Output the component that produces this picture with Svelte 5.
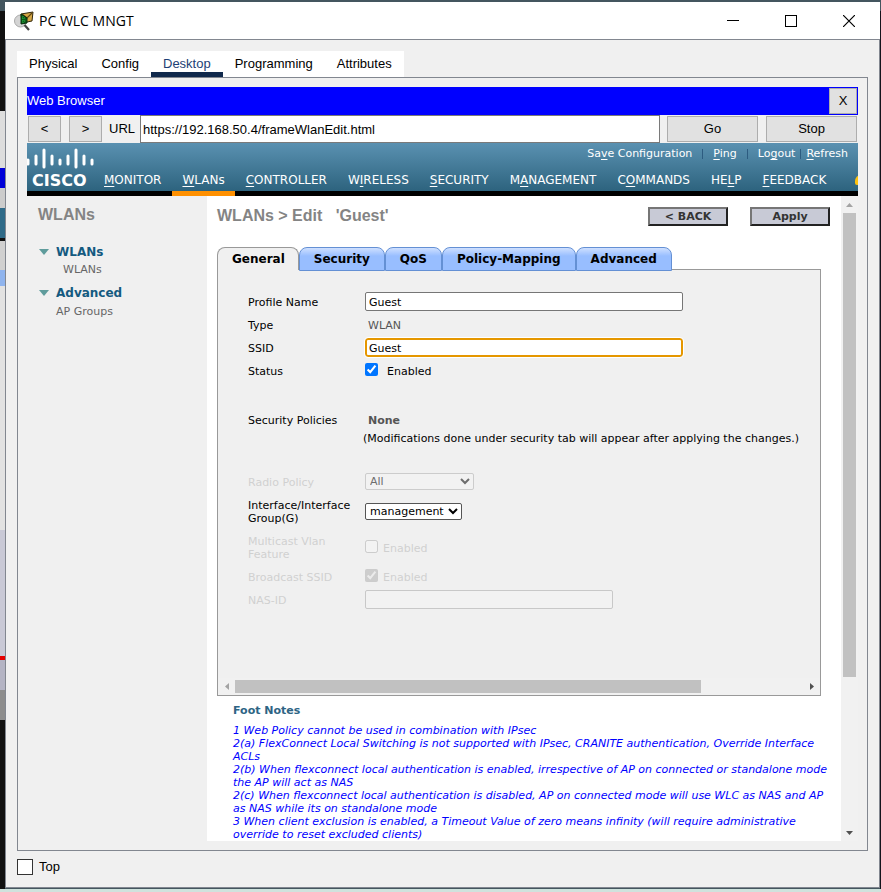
<script>
  const windowTabs = ['Physical', 'Config', 'Desktop', 'Programming', 'Attributes'];

  // Each entry: text before the access key, the key itself, text after it.
  const nav = [
    ['', 'M', 'ONITOR'],
    ['', 'W', 'LANs'],
    ['', 'C', 'ONTROLLER'],
    ['W', 'I', 'RELESS'],
    ['', 'S', 'ECURITY'],
    ['M', 'A', 'NAGEMENT'],
    ['C', 'O', 'MMANDS'],
    ['HE', 'L', 'P'],
    ['', 'F', 'EEDBACK']
  ];

  const editTabs = ['General', 'Security', 'QoS', 'Policy-Mapping', 'Advanced'];

  const notes = [
    ['1 Web Policy cannot be used in combination with IPsec'],
    ['2(a) FlexConnect Local Switching is not supported with IPsec, CRANITE authentication, Override Interface', 'ACLs'],
    ['2(b) When flexconnect local authentication is enabled, irrespective of AP on connected or standalone mode', 'the AP will act as NAS'],
    ['2(c) When flexconnect local authentication is disabled, AP on connected mode will use WLC as NAS and AP', 'as NAS while its on standalone mode'],
    ['3 When client exclusion is enabled, a Timeout Value of zero means infinity (will require administrative', 'override to reset excluded clients)']
  ];

  // Logo bars: [x centre, top, bottom]
  const bars = [
    [1, 13, 17], [9, 9, 17], [17, 3, 20], [25, 9, 17], [33, 13, 17],
    [41, 9, 17], [49, 3, 20], [57, 9, 17], [65, 13, 17]
  ];

  let url = $state('https://192.168.50.4/frameWlanEdit.html');
  let profile = $state('Guest');
  let ssid = $state('Guest');
</script>

<div class="desktop">
  <div class="window">
    <header class="titlebar">
      <svg class="appicon" width="20" height="20" viewBox="0 0 20 20" aria-hidden="true">
        <circle cx="6.5" cy="10" r="6" fill="#d4d4d4" stroke="#a9a9a9" />
        <path d="M7 3 L19 1 L18 10 L8 12 Z" fill="#d5a746" stroke="#33270c" stroke-width="1" />
        <path d="M8 3 L13 7 L18 2" fill="none" stroke="#5d4411" stroke-width="1.2" />
        <path d="M7 3 L13 7 L13 12 L7 13 Z" fill="#0b5a19" stroke="#072c0c" />
        <path d="M8 7h4M8 10h4M9 5v7" stroke="#27b143" stroke-width="1" stroke-dasharray="1 1" />
        <path d="M10.500 14 L15 19" stroke="#444" stroke-width="2.200" />
      </svg>
      <h1>PC WLC MNGT</h1>
      <button class="win" aria-label="Minimize"><svg width="12" height="12"><path d="M0 5.500H12" stroke="#000" /></svg></button>
      <button class="win" aria-label="Maximize"><svg width="12" height="12"><rect x=".5" y=".5" width="11" height="11" fill="none" stroke="#000" /></svg></button>
      <button class="win" aria-label="Close"><svg width="12" height="12"><path d="M0 0L12 12M12 0L0 12" stroke="#000" stroke-width="1.200" /></svg></button>
    </header>

    <div class="client">
      <nav class="wtabs">
        {#each windowTabs as t}
          <button class:active={t === 'Desktop'}>{t}</button>
        {/each}
      </nav>

      <div class="panel">
        <div class="bluebar">
          <span>Web Browser</span>
          <button class="qt" aria-label="Close browser">X</button>
        </div>
        <div class="toolbar">
          <div class="group-buttons">
            <button class="qt small">&lt;</button>
            <button class="qt small">&gt;</button>
          </div>
          <label for="url">URL</label>
          <input id="url" type="text" bind:value={url} />
          <div class="group-buttons">
            <button class="qt wide">Go</button>
            <button class="qt wide">Stop</button>
          </div>
        </div>

        <div class="banner">
          <svg class="logo" width="68" height="48" viewBox="0 0 68 48" aria-label="Cisco">
            {#each bars as [x, top, bottom]}
              <path d="M{x} {top}V{bottom}" transform="translate(0 4)" stroke="#fff" stroke-width="3" stroke-linecap="round" />
            {/each}
            <text x="5" y="43">CISCO</text>
          </svg>
          <div class="menus">
            <div class="quick">
              <a href="#save">Sa<u>v</u>e Configuration</a><i></i>
              <a href="#ping"><u>P</u>ing</a><i></i>
              <a href="#logout">Lo<u>g</u>out</a><i class="tight"></i>
              <a href="#refresh"><u>R</u>efresh</a>
            </div>
            <nav class="main">
              {#each nav as [a, k, b], n}
                <a href="#{k}" class:current={n === 1}>{a}<u>{k}</u>{b}</a>
              {/each}
              <span class="home"></span>
            </nav>
          </div>
        </div>

        <div class="page">
          <aside>
            <h2>WLANs</h2>
            <a class="group" href="#wlans"><span class="tri"></span>WLANs</a>
            <a class="leaf in" href="#wlanlist">WLANs</a>
            <a class="group" href="#adv"><span class="tri"></span>Advanced</a>
            <a class="leaf" href="#ap">AP Groups</a>
          </aside>

          <main>
            <div class="head">
              <h2>WLANs &gt; Edit &nbsp; 'Guest'</h2>
              <button>&lt; BACK</button>
              <button>Apply</button>
            </div>

            <div class="etabs">
              {#each editTabs as t, n}
                <button class:on={n === 0}>{t}</button>
              {/each}
            </div>

            <section class="box">
              <form>
                <div class="row">
                  <label for="profile">Profile Name</label>
                  <input id="profile" class="text" type="text" bind:value={profile} />
                </div>
                <div class="row">
                  <span>Type</span>
                  <span class="val">WLAN</span>
                </div>
                <div class="row">
                  <label for="ssid">SSID</label>
                  <input id="ssid" class="text focus" type="text" bind:value={ssid} />
                </div>
                <div class="row">
                  <span>Status</span>
                  <label class="tick wide"><input type="checkbox" checked />Enabled</label>
                </div>
                <div class="row policies">
                  <span>Security Policies</span>
                  <strong class="val">None</strong>
                </div>
                <p>(Modifications done under security tab will appear after applying the changes.)</p>
                <div class="row radio off">
                  <label for="radio">Radio Policy</label>
                  <select id="radio" class="all" disabled><option>All</option></select>
                </div>
                <div class="row tall">
                  <label for="iface">Interface/Interface<br />Group(G)</label>
                  <select id="iface" class="mgmt"><option>management</option></select>
                </div>
                <div class="row tall off">
                  <span>Multicast Vlan<br />Feature</span>
                  <label class="tick"><input type="checkbox" disabled />Enabled</label>
                </div>
                <div class="row off">
                  <span>Broadcast SSID</span>
                  <label class="tick"><input type="checkbox" checked disabled />Enabled</label>
                </div>
                <div class="row off">
                  <label for="nas">NAS-ID</label>
                  <input id="nas" class="text nas" type="text" disabled />
                </div>
              </form>
              <div class="hscroll">
                <svg width="17" height="17"><path d="M11 5v7L7 8.500z" fill="#a3a3a3" /></svg>
                <div class="track"><div class="thumb"></div></div>
                <svg width="17" height="17"><path d="M7 5v7l4-3.500z" fill="#505050" /></svg>
              </div>
            </section>

            <footer>
              <h3>Foot Notes</h3>
              {#each notes as note}
                {#each note as line}
                  <div>{line}</div>
                {/each}
              {/each}
            </footer>
          </main>

          <div class="vscroll">
            <svg width="17" height="17"><path d="M5 11h7L8.500 7z" fill="#a3a3a3" /></svg>
            <div class="track"><div class="thumb"></div></div>
            <svg width="17" height="17"><path d="M5 7h7l-3.500 4z" fill="#505050" /></svg>
          </div>
        </div>
      </div>

      <label class="top"><input type="checkbox" />Top</label>
    </div>
  </div>
</div>

<style>
  :global(body) {
    margin: 0;
  }
  * {
    box-sizing: border-box;
  }
  button,
  input {
    font: inherit;
    margin: 0;
  }
  h1,
  h2,
  h3,
  p {
    margin: 0;
  }
  a {
    color: inherit;
    text-decoration: none;
  }
  .desktop {
    height: 100vh;
    min-height: 720px;
    padding: 2px 1px 4px 5px;
    background:
      linear-gradient(#cfe2dd, #cfe2dd) bottom / 100% 3px no-repeat,
      linear-gradient(
          #44565f 0 11px, #111 11px 111px, #ddd 111px 168px, #0000d8 168px 188px, #ccc 188px 208px,
          #2f6b89 208px 238px, #111 238px 241px, #d0d0d0 241px 270px, #8fb4ee 270px 286px, #e2e2e2 286px 530px,
          #c9c9d6 530px 656px, #e60000 656px 660px, #b4b4c4 660px 690px, #8d8d8d 690px 720px, #111 720px
        )
        left / 5px 100% no-repeat,
      linear-gradient(#44565f 0 11px, #14141c 11px) right / 1px 100% no-repeat,
      #44565f;
    font: 13px/16px 'Liberation Sans', Arial, sans-serif;
    color: #000;
  }
  .window {
    height: 100%;
    display: flex;
    flex-direction: column;
    background: #f0f0f0;
    border-bottom: 1px solid #828790;
  }
  .titlebar {
    height: 37px;
    flex: none;
    display: flex;
    align-items: center;
    padding: 0 2px 0 9px;
    background: #fff;
  }
  h1 {
    flex: 1;
    margin-left: 5px;
    font: 14px/20px 'Open Sans', 'Noto Sans', sans-serif;
  }
  .win {
    width: 58px;
    height: 36px;
    padding: 0;
    border: 0;
    background: none;
    display: grid;
    place-items: center;
  }
  .client {
    flex: 1;
    min-height: 0;
    display: flex;
    flex-direction: column;
    border: 1px solid #828790;
    border-bottom: 0;
    padding: 11px 11px 0;
  }
  .wtabs {
    display: flex;
    align-self: flex-start;
    height: 26px;
    background: #fff;
  }
  .wtabs button {
    padding: 0 12px;
    border: 0;
    border-bottom: 5px solid transparent;
    border-top: 5px solid transparent;
    background: none;
    line-height: 16px;
  }
  .wtabs .active {
    color: #1c3f75;
    border-bottom-color: #10294c;
  }
  .panel {
    flex: 1;
    min-height: 0;
    display: flex;
    flex-direction: column;
    border: 1px solid #828790;
    padding: 9px;
  }
  .bluebar {
    height: 28px;
    flex: none;
    display: flex;
    align-items: center;
    justify-content: space-between;
    padding-right: 1px;
    background: #00f;
    color: #fff;
  }
  .qt {
    height: 26px;
    width: 28px;
    padding: 0;
    border: 1px solid #adadad;
    background: #e1e1e1;
    color: #000;
  }
  .toolbar {
    height: 28px;
    flex: none;
    display: flex;
    align-items: center;
    padding: 0 1px;
    gap: 7px;
  }
  .group-buttons {
    display: flex;
    gap: 8px;
  }
  .toolbar .small {
    width: 33px;
  }
  .toolbar .wide {
    width: 91px;
  }
  .toolbar label {
    width: 24px;
    white-space: nowrap;
  }
  .toolbar input {
    flex: 1;
    min-width: 0;
    height: 28px;
    padding: 0 2px;
    border: 1px solid #7a7a7a;
    background: #fff;
  }
  .banner {
    height: 53px;
    flex: none;
    display: flex;
    border-bottom: 5px solid #000;
    background: linear-gradient(#5a91b1, #2d637e);
    color: #fff;
    font-family: 'DejaVu Sans', Verdana, sans-serif;
  }
  .logo {
    flex: none;
    width: 68px;
  }
  .logo text {
    font: bold 16px 'DejaVu Sans', sans-serif;
    fill: #fff;
  }
  .menus {
    flex: 1;
    min-width: 0;
  }
  .quick {
    height: 20px;
    display: flex;
    justify-content: flex-end;
    align-items: center;
    padding: 2px 10px 0 0;
    font-size: 11px;
  }
  .quick i {
    width: 1px;
    height: 10px;
    margin: 0 10px;
    background: #2d5c80;
  }
  .quick .tight {
    margin: 0 5px;
  }
  .main {
    display: flex;
    gap: 1px;
    height: 33px;
    overflow: hidden;
    font-size: 12px;
  }
  .main a {
    height: 33px;
    padding: 9px 10px 0 9px;
    white-space: nowrap;
  }
  .main .current,
  .main .current ~ a {
    padding-left: 10px;
  }
  u {
    text-underline-offset: 2px;
  }
  .banner .main {
    margin-bottom: -5px;
  }
  .main .current {
    border-bottom: 5px solid #ff9000;
  }
  .home {
    flex: none;
    width: 12px;
    height: 10px;
    margin: 12px 0 0 auto;
    margin-right: -9px;
    border-radius: 6px 0 0 2px;
    background: #ffc20e;
  }
  .page {
    flex: 1;
    min-height: 0;
    display: flex;
    overflow: hidden;
    background: #fff;
    font: 11px/13px 'DejaVu Sans', Verdana, sans-serif;
  }
  aside {
    width: 180px;
    flex: none;
    display: flex;
    flex-direction: column;
    padding: 9px 11px;
    background: #f0f0f0;
  }
  h2 {
    font: bold 16px/20px 'Liberation Sans', Arial, sans-serif;
    color: #848484;
  }
  .group {
    display: flex;
    align-items: center;
    height: 20px;
    margin-top: 5px;
    font-size: 12px;
    font-weight: bold;
    color: #145a80;
  }
  h2 + .group {
    margin-top: 17px;
  }
  .tri {
    margin: 0 7px 0 1px;
    border: 5px solid transparent;
    border-top: 6px solid #5f9c9c;
    border-bottom: 0;
  }
  .leaf {
    padding: 2px 0 0 18px;
    line-height: 14px;
    color: #666;
  }
  .leaf.in {
    padding: 1px 0 1px 25px;
  }
  main {
    flex: 1;
    min-width: 0;
    padding: 10px 20px 0 10px;
  }
  .head {
    display: flex;
    align-items: center;
    gap: 22px;
    margin-right: -9px;
  }
  .head h2 {
    flex: 1;
    white-space: nowrap;
  }
  .head button {
    width: 80px;
    height: 19px;
    padding: 0;
    border: 2px solid #767676;
    border-right-color: #222;
    border-bottom-color: #222;
    background: #c8cad6;
    font-size: 11px;
    line-height: 13px;
    font-weight: bold;
    color: #333;
  }
  .etabs {
    position: relative;
    display: flex;
    height: 24px;
    margin: 21px 0 -2px;
  }
  .etabs button {
    height: 24px;
    padding: 0 14px;
    border: 1px solid #6490d4;
    border-radius: 8px 8px 0 0;
    background: linear-gradient(#cfe0ff, #98beff 8px);
    font-size: 12px;
    font-weight: bold;
    line-height: 20px;
    white-space: nowrap;
  }
  .etabs .on {
    height: 23px;
    padding-right: 13px;
    border-color: #999;
    border-bottom: 0;
    background: #f0f0f0;
  }
  .box {
    border: 1px solid #999;
    background: #f0f0f0;
  }
  form {
    height: 408px;
    padding: 20px 0 0 30px;
  }
  .row {
    display: grid;
    grid-template-columns: 117px auto;
    justify-content: start;
    align-items: center;
    height: 23px;
  }
  .row > span,
  .row > strong,
  .row > label {
    padding-top: 2px;
  }
  .off {
    color: #d0d0d0;
  }
  .val {
    padding-left: 3px;
    color: #555;
  }
  .text {
    width: 318px;
    height: 19px;
    padding: 1px 3px 0;
    border: 1px solid #767676;
    border-radius: 2px;
    background: #fff;
  }
  .focus {
    border: 2px solid #e59700;
    padding: 1px 2px 0;
    border-radius: 3px;
    outline: 1px solid #fff;
  }
  .nas {
    width: 248px;
    border-color: #c8c8c8;
    background: #f2f2f2;
  }
  .tick {
    display: flex;
    align-items: center;
    gap: 5px;
  }
  .tick.wide {
    gap: 9px;
  }
  .tick input {
    width: 13px;
    height: 13px;
    margin-top: -4px;
  }
  .policies {
    margin-top: 26px;
  }
  p {
    padding: 1px 0 0 115px;
    white-space: nowrap;
  }
  .radio {
    margin-top: 25px;
  }
  .tall {
    height: 36px;
  }
  select {
    height: 17px;
    margin: 0;
    padding: 0;
    border: 1px solid #555;
    border-radius: 2px;
    background-color: #fff;
    color: #000;
    font: 11px 'DejaVu Sans', Verdana, sans-serif;
  }
  select:disabled {
    opacity: 1;
    border-color: #ccc;
    background-color: #f2f2f2;
    color: #6d6d6d;
  }
  .all {
    width: 109px;
  }
  .mgmt {
    width: 97px;
  }
  .hscroll,
  .vscroll {
    display: flex;
    background: #f1f1f1;
  }
  .vscroll {
    width: 17px;
    flex: none;
    flex-direction: column;
    justify-content: space-between;
  }
  .track {
    flex: 1;
  }
  .thumb {
    background: #c1c1c1;
  }
  .hscroll .thumb {
    width: 82%;
    height: 13px;
    margin-top: 2px;
  }
  .vscroll .thumb {
    width: 13px;
    height: 76%;
    margin-left: 2px;
  }
  footer {
    padding: 8px 0 0 16px;
    font-style: italic;
    color: #00f;
    white-space: nowrap;
  }
  h3 {
    margin-bottom: 7px;
    font-size: 11px;
    font-style: normal;
    color: #2e6484;
  }
  .top {
    display: flex;
    align-items: center;
    align-self: flex-start;
    gap: 6px;
    height: 32px;
    margin-bottom: 4px;
    flex: none;
  }
  .top input {
    appearance: none;
    width: 16px;
    height: 16px;
    border: 1px solid #333;
    background: #fff;
  }
</style>
